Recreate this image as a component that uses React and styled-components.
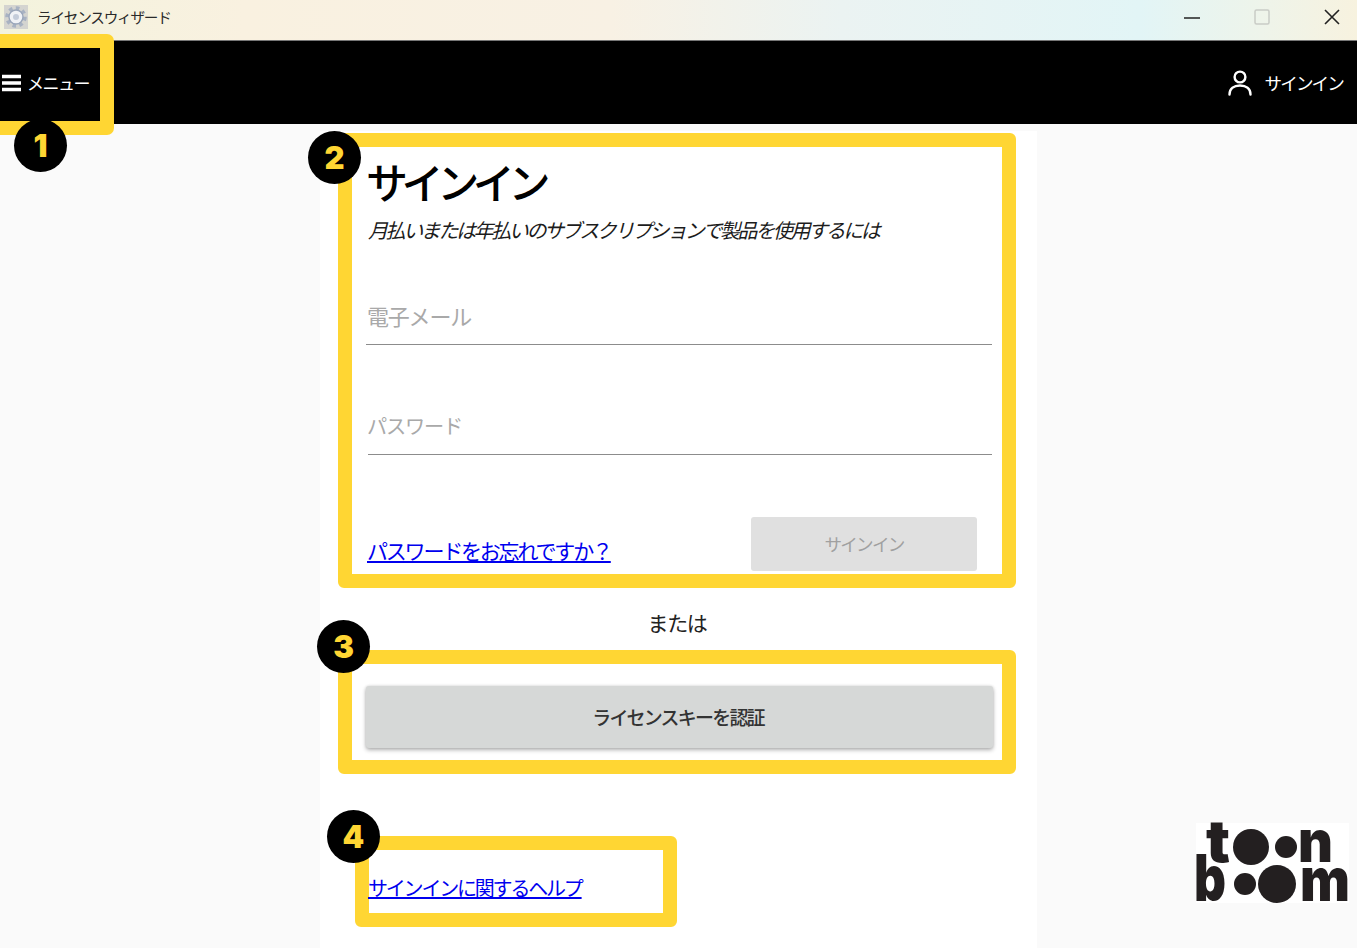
import React from 'react';
import styled, { createGlobalStyle } from 'styled-components';

const GlobalStyle = createGlobalStyle`
  html, body {
    margin: 0;
    height: 948px;
    overflow: hidden;
    background: #fafafa;
    font-family: "Noto Sans CJK JP", "Noto Sans", sans-serif;
  }
  * { box-sizing: border-box; }
`;

const YELLOW = '#ffd633';

const Page = styled.div`
  display: flex;
  flex-direction: column;
  height: 948px;
`;

const TitleBar = styled.div`
  display: flex;
  align-items: center;
  flex: 0 0 41px;
  padding: 0 17px 7px 4px;
  background: linear-gradient(90deg, #f3f3dd 0%, #f9f1e0 18%, #f8f1e4 45%, #ebf3f2 62%, #e2f5f6 84%, #eef4ea 93%, #f7f2df 100%);
  border-bottom: 1px solid #777;
`;

const AppTitle = styled.span`
  margin-left: 9px;
  font-size: 14.6px;
  letter-spacing: -1.2px;
  color: #2a2a2a;
`;

const WindowButtons = styled.div`
  display: flex;
  align-items: center;
  gap: 54px;
  margin-left: auto;
`;

const NavBar = styled.header`
  display: flex;
  align-items: center;
  justify-content: space-between;
  flex: 0 0 83px;
  padding: 0 14px 0 2px;
  background: #000;
  color: #fff;
`;

const MenuButton = styled.div`
  position: relative;
  display: flex;
  align-items: center;
  gap: 6px;
  font-size: 17px;
  letter-spacing: -1.5px;
`;

const MenuFrame = styled.div`
  position: absolute;
  left: -40px;
  right: -25px;
  top: -36px;
  bottom: -40px;
  border: 14px solid ${YELLOW};
  border-radius: 7px;
  pointer-events: none;
`;

const SignInLink = styled.div`
  display: flex;
  align-items: center;
  gap: 13px;
  font-size: 17.6px;
  letter-spacing: -1.9px;
`;

const Main = styled.main`
  flex: 1;
  display: flex;
  justify-content: center;
  padding-top: 7px;
`;

const Panel = styled.div`
  width: 717px;
  padding: 2px 21px 0 18px;
  background: #fff;
`;

const Section = styled.section`
  position: relative;
  border: 14px solid ${YELLOW};
  border-radius: 6px;
`;

const FormSection = styled(Section)`
  height: 455px;
  padding: 0 10px 0 14px;
`;

const Heading = styled.h1`
  margin: 10px 0 0;
  font-size: 42px;
  line-height: 48px;
  letter-spacing: -6.4px;
  font-weight: 500;
  color: #000;
`;

const Subtitle = styled.p`
  margin: 12px 0 0 2px;
  font-size: 20px;
  line-height: 26px;
  letter-spacing: -2.4px;
  font-style: italic;
  color: #1c1c1c;
`;

const Field = styled.input`
  display: block;
  width: 100%;
  height: 49px;
  padding: 0 0 10px 1px;
  border: 0;
  border-bottom: 1px solid #8c8c8c;
  outline: 0;
  background: transparent;
  font-family: inherit;
  font-size: ${(p) => p.$size}px;
  letter-spacing: -1.2px;
  margin-top: ${(p) => p.$top}px;
  margin-left: ${(p) => p.$left}px;
  &::placeholder { color: #a9a9a9; opacity: 1; }
`;

const PasswordField = styled(Field)`
  width: calc(100% - 2px);
  padding: 0 0 9px;
  text-indent: -1px;
`;

const FormFooter = styled.div`
  display: flex;
  align-items: flex-end;
  justify-content: space-between;
  margin-top: 62px;
  padding: 0 15px 0 1px;
`;

const TextLink = styled.a`
  color: #0000ee;
  text-decoration: underline;
  font-size: ${(p) => p.$size}px;
  letter-spacing: ${(p) => p.$spacing}px;
  line-height: 26px;
`;

const ForgotLink = styled(TextLink)`
  margin-bottom: 8px;
`;

const HelpLink = styled(TextLink)`
  margin-left: -1px;
`;

const DisabledButton = styled.button`
  width: 226px;
  height: 54px;
  border: 0;
  border-radius: 3px;
  background: #e0e0e0;
  color: #a0a0a0;
  font-family: inherit;
  font-size: 17.6px;
  letter-spacing: -1.8px;
  padding-bottom: 2px;
`;

const Divider = styled.div`
  height: 62px;
  padding-top: 6px;
  display: flex;
  align-items: center;
  justify-content: center;
  font-size: 21px;
  letter-spacing: -1.4px;
  color: #222;
`;

const LicenseSection = styled(Section)`
  height: 124px;
  padding: 22px 9px 0 14px;
`;

const LicenseButton = styled.button`
  display: block;
  width: 100%;
  height: 62px;
  padding: 0 3px 2px 0;
  border: 0;
  border-radius: 3px;
  background: #d6d8d7;
  box-shadow: 0 2px 4px rgba(0, 0, 0, 0.3), 0 0 3px rgba(0, 0, 0, 0.12);
  color: #333;
  font-family: inherit;
  font-size: 19px;
  letter-spacing: -1.8px;
  font-weight: 500;
`;

const HelpSection = styled(Section)`
  width: 322px;
  height: 91px;
  margin: 62px 0 0 17px;
  padding-top: 25px;
`;

const Badge = styled.div`
  position: absolute;
  left: ${(p) => p.$left}px;
  top: ${(p) => p.$top}px;
  display: flex;
  align-items: center;
  justify-content: center;
  width: 53px;
  height: 53px;
  border-radius: 50%;
  background: #000;
  color: ${YELLOW};
  font-family: Inter, "Liberation Sans", sans-serif;
  font-size: 31px;
  font-weight: 900;
  letter-spacing: 0;
  z-index: 2;
`;

const LogoMark = styled.svg`
  position: absolute;
  left: 1196px;
  top: 822px;
  overflow: visible;
`;

const GearIcon = () => (
  <svg width="24" height="26" viewBox="0 0 24 26">
    <rect x="0" y="1" width="24" height="24" fill="#d4d4d0" />
    <circle cx="12" cy="13" r="8.5" fill="none" stroke="#a8b2c2" strokeWidth="4.5" strokeDasharray="3.4 3.2" />
    <circle cx="12" cy="13" r="7" fill="#f0f2f6" stroke="#9aa6ba" strokeWidth="1.4" />
    <circle cx="12" cy="13" r="3" fill="#c4ccda" />
  </svg>
);

const MinimizeIcon = () => (
  <svg width="16" height="16" viewBox="0 0 16 16">
    <path d="M0 9h16" stroke="#222" strokeWidth="1.5" />
  </svg>
);

const MaximizeIcon = () => (
  <svg width="16" height="16" viewBox="0 0 16 16">
    <rect x="1" y="1" width="14" height="14" rx="1.5" fill="none" stroke="#c9ccc6" strokeWidth="1.5" />
  </svg>
);

const CloseIcon = () => (
  <svg width="16" height="16" viewBox="0 0 16 16">
    <path d="M1 1l14 14M15 1L1 15" stroke="#222" strokeWidth="1.6" />
  </svg>
);

const HamburgerIcon = () => (
  <svg width="19" height="18" viewBox="0 0 19 18">
    <path d="M0 2.5h19M0 9h19M0 15.5h19" stroke="#fff" strokeWidth="3.4" />
  </svg>
);

const UserIcon = () => (
  <svg width="24" height="26" viewBox="0 0 24 26" fill="none" stroke="#fff" strokeWidth="2.4" strokeLinecap="round">
    <circle cx="12" cy="7" r="5.4" />
    <path d="M1.500 24.500c0-6 4.500-9 10.500-9s10.500 3 10.500 9" />
  </svg>
);

const ToonBoomLogo = () => (
  <LogoMark width="153" height="81" viewBox="0 0 153 81">
    <rect x="0" y="1" width="153" height="80" fill="#fff" />
    <g fill="#231f20" fontFamily="Inter, 'Liberation Sans', sans-serif" fontWeight="900">
      <text x="10" y="40" fontSize="58" textLength="24" lengthAdjust="spacingAndGlyphs">t</text>
      <circle cx="55" cy="25" r="18" />
      <circle cx="90" cy="25" r="11" />
      <text x="102" y="40" fontSize="58" textLength="35" lengthAdjust="spacingAndGlyphs">n</text>
      <text x="-2" y="79" fontSize="64" textLength="32" lengthAdjust="spacingAndGlyphs">b</text>
      <circle cx="49" cy="62" r="11" />
      <circle cx="81" cy="62" r="19" />
      <text x="104" y="79" fontSize="60" textLength="50" lengthAdjust="spacingAndGlyphs">m</text>
    </g>
  </LogoMark>
);

const App = () => (
  <Page>
    <GlobalStyle />
    <TitleBar>
      <GearIcon />
      <AppTitle>ライセンスウィザード</AppTitle>
      <WindowButtons>
        <MinimizeIcon />
        <MaximizeIcon />
        <CloseIcon />
      </WindowButtons>
    </TitleBar>
    <NavBar>
      <MenuButton>
        <HamburgerIcon />
        メニュー
        <MenuFrame />
        <Badge $left={12} $top={49}>1</Badge>
      </MenuButton>
      <SignInLink>
        <UserIcon />
        サインイン
      </SignInLink>
    </NavBar>
    <Main>
      <Panel>
        <FormSection>
          <Badge $left={-44} $top={-16}>2</Badge>
          <Heading>サインイン</Heading>
          <Subtitle>月払いまたは年払いのサブスクリプションで製品を使用するには</Subtitle>
          <Field placeholder="電子メール" $size={22} $top={53} $left={0} />
          <PasswordField placeholder="パスワード" $size={20.2} $top={61} $left={2} />
          <FormFooter>
            <ForgotLink href="#" $size={21} $spacing={-2.2}>パスワードをお忘れですか？</ForgotLink>
            <DisabledButton disabled>サインイン</DisabledButton>
          </FormFooter>
        </FormSection>
        <Divider>または</Divider>
        <LicenseSection>
          <Badge $left={-35} $top={-44}>3</Badge>
          <LicenseButton>ライセンスキーを認証</LicenseButton>
        </LicenseSection>
        <HelpSection>
          <Badge $left={-42} $top={-40}>4</Badge>
          <HelpLink href="#" $size={20} $spacing={-2.2}>サインインに関するヘルプ</HelpLink>
        </HelpSection>
      </Panel>
    </Main>
    <ToonBoomLogo />
  </Page>
);

export default App;
